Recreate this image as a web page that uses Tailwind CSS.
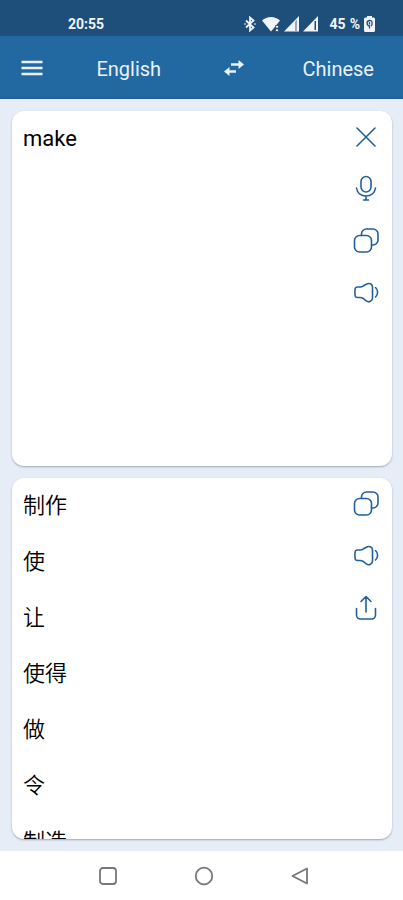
<!DOCTYPE html>
<html lang="en">
<head>
<meta charset="utf-8">
<meta name="viewport" content="width=device-width, initial-scale=1">
<title>Translator</title>
<script src="https://cdn.jsdelivr.net/npm/@tailwindcss/browser@4"></script>
</head>
<body class="flex h-screen flex-col bg-[#e6edf6] font-[Roboto,'Noto_Sans_CJK_SC',sans-serif] text-black">
<svg class="hidden" aria-hidden="true">
  <symbol id="copy" viewBox="0 0 28 28"><path d="M9.500 8.500V7a5 5 0 0 1 5-5h6.500a5 5 0 0 1 5 5v6a5 5 0 0 1-5 5h-1.500"/><rect x="2.500" y="8.500" width="17" height="16.500" rx="5"/></symbol>
  <symbol id="speaker" viewBox="0 0 28 28"><path d="M5.500 8h2.500c1.500 0 2.500-.5 3.500-1.200l2.800-1.600c2.800-1.700 6.200-.2 6.200 2.800v11c0 3-3.400 4.800-6.200 2.900l-2.800-2.200c-1-.8-2-1.200-3.500-1.200h-2.500c-1.600 0-2.200-.7-2.400-2-.3-2-.3-4.500 0-6.500.2-1.300.8-2 2.400-2Z"/><path d="M23.500 8.500c2.800 2.500 2.800 7 0 9.500"/></symbol>
</svg>

<div class="flex h-9 shrink-0 items-center justify-between bg-[#1d4f7a] pt-3 pr-7 pl-17 text-sm font-bold text-[#f1f5fb]">
  <time>20:55</time>
  <div class="flex items-center">
    <svg class="mr-1 h-4 w-4" viewBox="0 0 16 16" fill="none" stroke="currentColor" stroke-width="1.800"><path d="m4 4.500 7.500 7L8 14.500v-13l3.500 3L4 11.500"/><path d="M2.500 8h1M12.500 8h1" stroke-width="2"/></svg>
    <svg class="mr-1 h-4 w-[18px]" viewBox="0 0 18 16" fill="currentColor"><path d="M0 4.500C5-.2 13-.2 18 4.500L14 9.500 9 15.500Z"/><path stroke="#1d4f7a" stroke-width=".8" d="M13.500 9.500h3V12h-3zm0 3.500h3v2.500h-3z"/></svg>
    <svg class="mr-1 h-4 w-[15px]" viewBox="0 0 15 16"><path fill="currentColor" d="M0 15.500 15 0v15.500Z"/><path fill="#91a9c0" d="M11 5.500 13 3.500v12h-2Z"/></svg>
    <svg class="mr-3 h-4 w-[15px]" viewBox="0 0 15 16"><path fill="currentColor" d="M0 15.500 15 0v15.500Z"/><path fill="#1d4f7a" d="M11.500 5h1.500v9h-1.500Z"/></svg>
    <span class="mr-1 flex gap-1"><span>45</span><span>%</span></span>
    <svg class="h-4 w-[11px]" viewBox="0 0 11 16"><path fill="currentColor" d="M3 0h5v1.500h1.500A1.500 1.500 0 0 1 11 3v11.500a1.500 1.500 0 0 1-1.500 1.500h-8A1.500 1.500 0 0 1 0 14.500V3a1.500 1.500 0 0 1 1.500-1.500H3Z"/><path fill="none" stroke="#1d4f7a" stroke-width="1.300" d="M5.500 12.500V10C2.500 9.500 2 5 5.500 4.500S8.500 9 7 10M5.500 6v2.500"/></svg>
  </div>
</div>

<header class="flex h-[63px] shrink-0 items-center border-b border-[#1b5c92] bg-[#2269a2] pt-[3px] text-xl text-[#e9f2fc]">
  <button class="flex h-full w-16 items-center justify-center" aria-label="Menu">
    <svg class="h-6 w-6" viewBox="0 0 24 24" stroke="currentColor" stroke-width="2.400"><path d="M1.500 5h21M1.500 11h21M1.500 17h21"/></svg>
  </button>
  <button class="h-full flex-1">English</button>
  <button class="flex h-full w-20 items-center justify-center" aria-label="Swap languages">
    <svg class="h-6 w-6" viewBox="0 0 24 24" fill="currentColor"><path d="m16.500 3 5.500 4.500-5.500 4.500V8.800H9V6.200h7.500ZM7.500 10v3.200H14v2.600H7.500v3.200L2 14.500Z"/></svg>
  </button>
  <button class="h-full flex-1">Chinese</button>
</header>

<main class="flex min-h-0 flex-1 flex-col gap-3 py-3 pr-[11px] pl-3">
  <section class="flex min-h-0 flex-[355_1_0%] overflow-hidden rounded-xl bg-white shadow-[0_1px_2px_#9aa8b8]" aria-label="Source text">
    <textarea class="min-w-0 flex-1 resize-none px-[11px] py-3 text-[22px] leading-8 outline-none" aria-label="Text to translate" spellcheck="false">make</textarea>
    <div class="flex w-13 flex-col text-[#205f9c]">
      <button class="flex h-13 items-center justify-center" aria-label="Clear"><svg class="h-7 w-7" viewBox="0 0 28 28" fill="none" stroke="currentColor" stroke-width="1.600" stroke-linecap="round"><path d="m5 5 18 18M23 5 5 23"/></svg></button>
      <button class="flex h-13 items-center justify-center" aria-label="Speak"><svg class="h-7 w-7" viewBox="0 0 28 28" fill="none" stroke="currentColor" stroke-width="1.600" stroke-linecap="round"><rect x="9" y="1.500" width="10" height="15.500" rx="5"/><path d="M4.500 13c.7 5 4.500 8 9.500 8s8.800-3 9.500-8M14 21v4M11.500 25h5"/></svg></button>
      <button class="flex h-13 items-center justify-center" aria-label="Copy source"><svg class="h-7 w-7" fill="none" stroke="currentColor" stroke-width="1.600" stroke-linecap="round"><use href="#copy"/></svg></button>
      <button class="flex h-13 items-center justify-center" aria-label="Listen to source"><svg class="h-7 w-7" fill="none" stroke="currentColor" stroke-width="1.600" stroke-linecap="round"><use href="#speaker"/></svg></button>
    </div>
  </section>

  <section class="flex min-h-0 flex-[361_1_0%] overflow-hidden rounded-xl bg-white shadow-[0_1px_2px_#9aa8b8]" aria-label="Translations">
    <ul class="min-w-0 flex-1 px-[11px] text-[22px] leading-14 font-[350]" lang="zh-CN">
      <li>制作</li>
      <li>使</li>
      <li>让</li>
      <li>使得</li>
      <li>做</li>
      <li>令</li>
      <li>制造</li>
    </ul>
    <div class="flex w-13 flex-col text-[#205f9c]">
      <button class="flex h-13 items-center justify-center" aria-label="Copy translation"><svg class="h-7 w-7" fill="none" stroke="currentColor" stroke-width="1.600" stroke-linecap="round"><use href="#copy"/></svg></button>
      <button class="flex h-13 items-center justify-center" aria-label="Listen to translation"><svg class="h-7 w-7" fill="none" stroke="currentColor" stroke-width="1.600" stroke-linecap="round"><use href="#speaker"/></svg></button>
      <button class="flex h-13 items-center justify-center" aria-label="Share"><svg class="h-7 w-7" fill="none" viewBox="0 0 28 28" stroke="currentColor" stroke-width="1.600" stroke-linecap="round" stroke-linejoin="round"><path d="M14 18V3M9 7.500 14 2.500l5 5M4.500 14.500V21a4 4 0 0 0 4 4h11a4 4 0 0 0 4-4v-6.500"/></svg></button>
    </div>
  </section>
</main>

<nav class="flex h-[49px] shrink-0 items-center justify-center gap-17 bg-white pl-1 text-[#777]" aria-label="System navigation">
  <button class="p-1" aria-label="Recent apps"><svg class="h-5 w-5" viewBox="0 0 20 20" fill="none" stroke="currentColor" stroke-width="1.800"><rect x="2" y="2" width="16" height="16" rx="3"/></svg></button>
  <button class="p-1" aria-label="Home"><svg class="h-5 w-5" viewBox="0 0 20 20" fill="none" stroke="currentColor" stroke-width="1.800"><circle cx="10" cy="10" r="8.300"/></svg></button>
  <button class="p-1" aria-label="Back"><svg class="h-5 w-5" viewBox="0 0 20 20" fill="none" stroke="currentColor" stroke-width="1.800" stroke-linejoin="round"><path d="M17 2.500v15L2.500 10Z"/></svg></button>
</nav>
</body>
</html>
